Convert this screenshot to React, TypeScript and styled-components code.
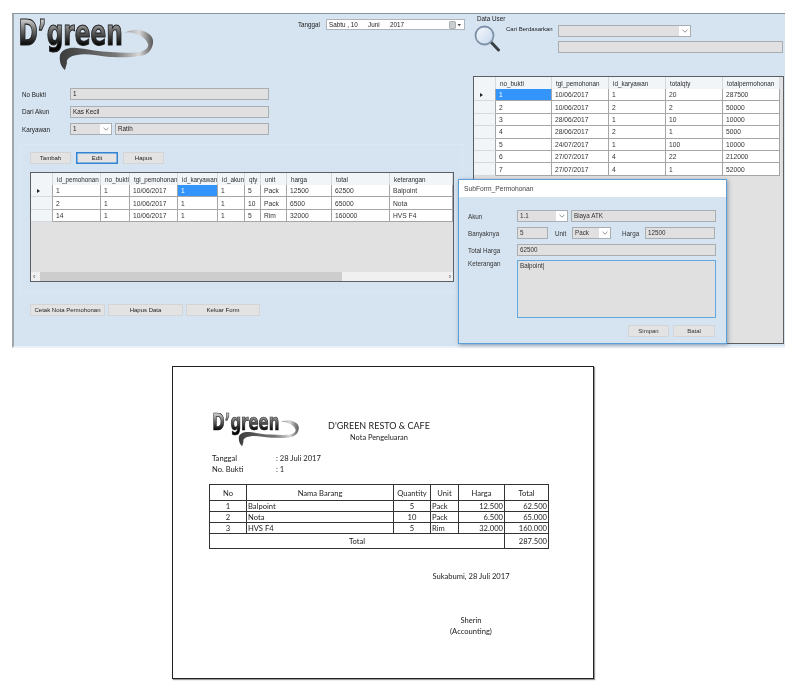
import React from "react";
import styled, { createGlobalStyle } from "styled-components";

const Global = createGlobalStyle`
  html, body { margin: 0; padding: 0; background: #fff; }
  body { font-family: "Liberation Sans", Arial, sans-serif; }
  * { box-sizing: border-box; }
`;

const Page = styled.div`
  width: 800px;
  height: 700px;
  padding-top: 13px;
  overflow: hidden;
`;

const AppWindow = styled.section`
  position: relative;
  display: flex;
  width: 773px;
  height: 335px;
  margin-left: 12px;
  background: #d6e4f2;
  border-top: 1px solid #8d939a;
  border-left: 2px solid #a3a6aa;
  border-bottom: 2px solid #e9f0f7;
  font-size: 6.3px;
  color: #222;
  filter: blur(0.35px);
`;

const LeftPane = styled.div`
  flex: 0 0 459px;
  padding-left: 8px;
`;

const HeaderRow = styled.div`
  display: flex;
  justify-content: space-between;
  align-items: flex-start;
  height: 74px;
  padding-right: 8px;
`;

const LogoSvg = styled.svg<{ $shift: number; $top: number }>`
  display: block;
  flex: none;
  margin: ${(p) => p.$top}px 0 0 ${(p) => p.$shift}px;
`;

const DateGroup = styled.div`
  display: flex;
  align-items: center;
  gap: 6px;
  margin-top: 5px;
`;

const DateBox = styled.div`
  display: flex;
  align-items: center;
  width: 139px;
  height: 11px;
  padding: 0 2px;
  background: #fff;
  border: 1px solid #aeb4ba;
`;

const DatePart = styled.span<{ $w: number }>`
  width: ${(p) => p.$w}px;
  flex: none;
`;

const CalendarIcon = styled.svg`
  margin-left: auto;
  display: block;
`;

const FieldStack = styled.div`
  display: flex;
  flex-direction: column;
  gap: 5.5px;
`;

const FieldRow = styled.div`
  display: flex;
  align-items: center;
  height: 12px;
  gap: 3px;
`;

const RowLabel = styled.span<{ $w: number }>`
  flex: none;
  width: ${(p) => p.$w}px;
`;

const InlineLabel = styled.span<{ $l: number; $w: number }>`
  flex: none;
  width: ${(p) => p.$w}px;
  margin-left: ${(p) => p.$l}px;
`;

const InputBox = styled.div<{ $w: number }>`
  flex: none;
  width: ${(p) => p.$w}px;
  height: 12px;
  line-height: 10px;
  padding-left: 2px;
  background: #e0e0e0;
  border: 1px solid #a9aeb3;
  white-space: nowrap;
`;

const SelectBox = styled.div<{ $w: number }>`
  flex: none;
  display: flex;
  justify-content: space-between;
  width: ${(p) => p.$w}px;
  height: 12px;
  line-height: 10px;
  padding-left: 2px;
  background: #e0e0e0;
  border: 1px solid #a9aeb3;
`;

const SelectArrow = styled.span`
  flex: none;
  width: 11px;
  height: 10px;
  display: flex;
  align-items: center;
  justify-content: center;
  background: #fff;
`;

const GroupPanel = styled.div`
  width: 443px;
  height: 149px;
  margin: 9px 0 0 -2px;
  padding: 7px 9px;
  border: 1px solid #dce7f3;
`;

const ButtonRow = styled.div<{ $gap: number }>`
  display: flex;
  gap: ${(p) => p.$gap}px;
`;

const Btn = styled.div<{ $w: number; $focus?: boolean }>`
  flex: none;
  width: ${(p) => p.$w}px;
  height: 12px;
  line-height: 10px;
  font-size: 6px;
  text-align: center;
  white-space: nowrap;
  background: #e3e3e3;
  border: 1px solid ${(p) => (p.$focus ? "#2f84d4" : "#d2d4d6")};
  ${(p) => (p.$focus ? "box-shadow: inset 0 0 0 0.5px #2f84d4;" : "")}
`;

const GridFrame = styled.div<{ $w: number; $h: number }>`
  position: relative;
  width: ${(p) => p.$w}px;
  height: ${(p) => p.$h}px;
  background: #e1e1e1;
  border: 1px solid #5b5f63;
  overflow: hidden;
`;

const DetailFrame = styled(GridFrame)`
  margin-top: 8px;
`;

const GridTable = styled.table<{ $w: number }>`
  width: ${(p) => p.$w}px;
  table-layout: fixed;
  border-collapse: separate;
  border-spacing: 0;
  font-size: 6.7px;
  color: #333;
`;

const HeadCell = styled.th`
  height: 12px;
  padding: 0 0 0 4px;
  background: #f2f5f8;
  font-weight: 400;
  font-size: 6.3px;
  text-align: left;
  white-space: nowrap;
  overflow: hidden;
  color: #2b2b2b;
  border-right: 1px solid #d5d9dd;
`;

const Cell = styled.td<{ $sel?: boolean }>`
  height: 12.4px;
  padding: 0 0 0 3px;
  background: ${(p) => (p.$sel ? "#3395fb" : "#fff")};
  color: ${(p) => (p.$sel ? "#fff" : "#333")};
  border-right: 1px solid #a6a6a6;
  border-bottom: 1px solid #a6a6a6;
  white-space: nowrap;
  overflow: hidden;
`;

const RowHeader = styled.td`
  height: 12.4px;
  padding: 0 0 0 6px;
  background: #f2f5f8;
  border-right: 1px solid #a6a6a6;
  border-bottom: 1px solid #d5d9dd;
`;

const RowPointer = styled.span`
  display: block;
  width: 0;
  height: 0;
  border-left: 3px solid #222;
  border-top: 2.5px solid transparent;
  border-bottom: 2.5px solid transparent;
`;

const ScrollBar = styled.div`
  position: absolute;
  left: 0;
  right: 0;
  bottom: 0;
  display: flex;
  align-items: center;
  height: 9px;
  background: #f0f0f0;
  color: #444;
  font-size: 7px;
  padding: 0 2px;
`;

const ScrollThumb = styled.div`
  width: 302px;
  height: 9px;
  margin-left: 5px;
  background: #cdcdcd;
`;

const ScrollEnd = styled.span`
  margin-left: auto;
`;

const BottomButtons = styled(ButtonRow)`
  margin: 11px 0 0 8px;
`;

const RightPane = styled.div`
  flex: 1;
  min-width: 0;
`;

const SearchHeader = styled.div`
  position: relative;
  height: 62px;
  padding: 0 2px 0 1px;
`;

const PaneTitle = styled.div`
  height: 10px;
  padding: 1px 0 0 3px;
`;

const SearchBody = styled.div`
  display: flex;
  align-items: flex-start;
`;

const Magnifier = styled.svg`
  flex: none;
  display: block;
  margin-top: 1px;
`;

const SearchLabel = styled.span`
  flex: none;
  width: 52px;
  margin: 2px 0 0 5px;
  font-size: 6px;
  white-space: nowrap;
`;

const SearchFields = styled.div`
  display: flex;
  flex-direction: column;
  gap: 4px;
  margin-top: 1px;
`;

const Dialog = styled.div`
  position: absolute;
  left: 444px;
  top: 165px;
  width: 269px;
  height: 165px;
  background: #d6e4f2;
  border: 1px solid #5c9fd8;
  box-shadow: 1px 1px 4px rgba(60, 80, 100, 0.5);
  color: #333;
`;

const DialogTitle = styled.div`
  height: 17px;
  line-height: 17px;
  padding-left: 5px;
  background: #fff;
  color: #444;
  font-size: 6.7px;
`;

const DialogBody = styled.div`
  display: flex;
  flex-direction: column;
  gap: 5px;
  padding: 13px 11px 0 9px;
`;

const TextArea = styled.div`
  flex: none;
  width: 199px;
  height: 58px;
  padding: 1px 2px;
  background: #e0e0e0;
  border: 1px solid #62a8e0;
`;

const AreaRow = styled.div`
  display: flex;
  height: 58px;
  margin-top: -1px;
`;

const DialogActions = styled(ButtonRow)`
  justify-content: flex-end;
  margin-top: 2px;
`;

const Sheet = styled.article`
  width: 422px;
  height: 313px;
  margin: 18px 0 0 172px;
  padding: 45px 0 0 39px;
  background: #fff;
  border: 1px solid #222;
  box-shadow: 1px 1px 1px #999;
  font-family: Lato, "Liberation Sans", sans-serif;
  font-size: 7.6px;
  color: #222;
  filter: blur(0.3px);
`;

const SheetHeader = styled.header`
  display: flex;
  height: 41px;
`;

const SheetTitles = styled.div`
  width: 104px;
  margin: 8px 0 0 27px;
  text-align: center;
`;

const SheetTitle = styled.div`
  font-size: 9px;
  line-height: 12px;
  white-space: nowrap;
`;

const SheetSub = styled.div`
  font-size: 7.4px;
  line-height: 12px;
`;

const MetaGrid = styled.dl`
  display: grid;
  grid-template-columns: 64px auto;
  grid-auto-rows: 11px;
  margin: 0;
  line-height: 11px;
`;

const MetaTerm = styled.dt`
  margin: 0;
`;

const MetaValue = styled.dd`
  margin: 0;
`;

const NoteTable = styled.table`
  width: 339px;
  margin: 9px 0 0 -3px;
  table-layout: fixed;
  border-collapse: collapse;
  font-size: 7.6px;
`;

const NoteHead = styled.th`
  height: 16px;
  padding: 0;
  border: 1px solid #333;
  font-weight: 400;
  text-align: center;
`;

const NoteCell = styled.td<{ $align: string }>`
  height: 11px;
  padding: 0 1px;
  border: 1px solid #333;
  text-align: ${(p) => p.$align};
  line-height: 9px;
`;

const NoteTotal = styled(NoteCell)`
  height: 15px;
`;

const SignBlock = styled.div`
  width: 100px;
  margin: 22px 0 0 209px;
  text-align: center;
  line-height: 11px;
  white-space: nowrap;
`;

const SignName = styled.div`
  margin-top: 33px;
`;

const Logo = ({ width, shift, top }: { width: number; shift: number; top: number }) => (
  <LogoSvg $shift={shift} $top={top} width={width} height={(width * 64) / 137} viewBox="0 -8 137 64">
    <defs>
      <linearGradient id="logoText" gradientUnits="userSpaceOnUse" x1="0" y1="-20" x2="0" y2="0">
        <stop offset="0" stopColor="#e4e4e4" />
        <stop offset="0.45" stopColor="#707070" />
        <stop offset="1" stopColor="#050505" />
      </linearGradient>
      <linearGradient id="logoSwoosh" x1="0" y1="0" x2="1" y2="0">
        <stop offset="0" stopColor="#3c3c3c" />
        <stop offset="0.6" stopColor="#777" />
        <stop offset="0.85" stopColor="#d8d8d8" />
        <stop offset="1" stopColor="#555" />
      </linearGradient>
    </defs>
    <path
      d="M105 16 C112 13 118 12 122 13 C131 15 136 20 135 26 C134 34 129 38 122 39 C110 41 100 40 92 40 C80 39 68 36 59 38 C52 39 48 42 49 46 L47 53 C43 50 41 44 42 38 C44 32 52 30 59 31 C70 32 82 35 92 35 C102 36 114 36 122 35 C128 33 131 30 130 27 C128 21 122 18 115 16 C111 15 108 15 105 16 Z"
      fill="url(#logoSwoosh)"
    />
    <text
      transform="translate(0.5 28) scale(0.895 1.385)"
      fontFamily="'DejaVu Sans', sans-serif"
      fontWeight="700"
      fontSize="26"
      fill="url(#logoText)"
      stroke="#222"
      strokeWidth="0.8"
    >
      D’green
    </text>
  </LogoSvg>
);

const Chevron = () => (
  <svg width="6" height="4" viewBox="0 0 6 4">
    <path d="M0.5 0.8 L3 3.2 L5.5 0.8" fill="none" stroke="#777" strokeWidth="0.8" />
  </svg>
);

const Select = ({ w, value }: { w: number; value?: string }) => (
  <SelectBox $w={w}>
    <span>{value}</span>
    <SelectArrow>
      <Chevron />
    </SelectArrow>
  </SelectBox>
);

const detailCols = [22, 48, 29, 48, 40, 27, 16, 26, 45, 58, 63];
const detailHead = ["", "id_pemohonan", "no_bukti", "tgl_pemohonan", "id_karyawan", "id_akun", "qty", "unit", "harga", "total", "keterangan"];
const detailRows = [
  ["1", "1", "10/06/2017", "1", "1", "5", "Pack", "12500", "62500", "Balpoint"],
  ["2", "1", "10/06/2017", "1", "1", "10", "Pack", "6500", "65000", "Nota"],
  ["14", "1", "10/06/2017", "1", "1", "5", "Rim", "32000", "160000", "HVS F4"],
];

const masterCols = [22, 56, 57, 57, 57, 57];
const masterHead = ["", "no_bukti", "tgl_pemohonan", "id_karyawan", "totalqty", "totalpermohonan"];
const masterRows = [
  ["1", "10/06/2017", "1", "20", "287500"],
  ["2", "10/06/2017", "2", "2", "50000"],
  ["3", "28/06/2017", "1", "10", "10000"],
  ["4", "28/06/2017", "2", "1", "5000"],
  ["5", "24/07/2017", "1", "100", "10000"],
  ["6", "27/07/2017", "4", "22", "212000"],
  ["7", "27/07/2017", "4", "1", "52000"],
];

const DataGrid = ({ cols, head, rows, selected }: { cols: number[]; head: string[]; rows: string[][]; selected: number }) => (
  <GridTable $w={cols.reduce((a, b) => a + b, 0)}>
    <colgroup>
      {cols.map((c, i) => (
        <col key={i} width={c} />
      ))}
    </colgroup>
    <thead>
      <tr>
        {head.map((h, i) => (
          <HeadCell key={i}>{h}</HeadCell>
        ))}
      </tr>
    </thead>
    <tbody>
      {rows.map((r, ri) => (
        <tr key={ri}>
          <RowHeader>{ri === 0 && <RowPointer />}</RowHeader>
          {r.map((c, ci) => (
            <Cell key={ci} $sel={ri === 0 && ci === selected}>
              {c}
            </Cell>
          ))}
        </tr>
      ))}
    </tbody>
  </GridTable>
);

const noteCols = [37, 147, 37, 28, 46, 44];
const noteRows = [
  ["1", "Balpoint", "5", "Pack", "12.500", "62.500"],
  ["2", "Nota", "10", "Pack", "6.500", "65.000"],
  ["3", "HVS F4", "5", "Rim", "32.000", "160.000"],
];
const noteAlign = ["center", "left", "center", "left", "right", "right"];

export default function App() {
  return (
    <Page>
      <Global />
      <AppWindow>
        <LeftPane>
          <HeaderRow>
            <Logo width={137} shift={-4} top={-5} />
            <DateGroup>
              <span>Tanggal</span>
              <DateBox>
                <DatePart $w={39}>Sabtu , 10</DatePart>
                <DatePart $w={22}>Juni</DatePart>
                <span>2017</span>
                <CalendarIcon width="13" height="8" viewBox="0 0 13 8">
                  <rect x="0.5" y="0.5" width="6" height="7" rx="1" fill="#c9ced3" stroke="#888" strokeWidth="0.6" />
                  <path d="M8.5 3 L12 3 L10.2 5.2 Z" fill="#444" />
                </CalendarIcon>
              </DateBox>
            </DateGroup>
          </HeaderRow>
          <FieldStack>
            <FieldRow>
              <RowLabel $w={45}>No Bukti</RowLabel>
              <InputBox $w={199}>1</InputBox>
            </FieldRow>
            <FieldRow>
              <RowLabel $w={45}>Dari Akun</RowLabel>
              <InputBox $w={199}>Kas Kecil</InputBox>
            </FieldRow>
            <FieldRow>
              <RowLabel $w={45}>Karyawan</RowLabel>
              <Select w={42} value="1" />
              <InputBox $w={154}>Ratih</InputBox>
            </FieldRow>
          </FieldStack>
          <GroupPanel>
            <ButtonRow $gap={5}>
              <Btn $w={41}>Tambah</Btn>
              <Btn $w={42} $focus>
                Edit
              </Btn>
              <Btn $w={41}>Hapus</Btn>
            </ButtonRow>
            <DetailFrame $w={424} $h={110}>
              <DataGrid cols={detailCols} head={detailHead} rows={detailRows} selected={3} />
              <ScrollBar>
                ‹
                <ScrollThumb />
                <ScrollEnd>›</ScrollEnd>
              </ScrollBar>
            </DetailFrame>
          </GroupPanel>
          <BottomButtons $gap={3}>
            <Btn $w={75}>Cetak Nota Permohonan</Btn>
            <Btn $w={75}>Hapus Data</Btn>
            <Btn $w={74}>Keluar Form</Btn>
          </BottomButtons>
        </LeftPane>
        <RightPane>
          <SearchHeader>
            <PaneTitle>Data User</PaneTitle>
            <SearchBody>
              <Magnifier width="27" height="27" viewBox="0 0 27 27">
                <defs>
                  <linearGradient id="lens" x1="0" y1="0" x2="1" y2="1">
                    <stop offset="0" stopColor="#f7fbff" />
                    <stop offset="1" stopColor="#c4d6ea" />
                  </linearGradient>
                </defs>
                <path d="M16 16 L24.5 25" stroke="#3a3f44" strokeWidth="3" strokeLinecap="round" />
                <circle cx="10.5" cy="10.5" r="9" fill="url(#lens)" stroke="#7f93a8" strokeWidth="1.8" />
              </Magnifier>
              <SearchLabel>Cari Berdasarkan</SearchLabel>
              <SearchFields>
                <Select w={133} />
                <InputBox $w={225} />
              </SearchFields>
            </SearchBody>
          </SearchHeader>
          <GridFrame $w={311} $h={268}>
            <DataGrid cols={masterCols} head={masterHead} rows={masterRows} selected={0} />
          </GridFrame>
        </RightPane>
        <Dialog>
          <DialogTitle>SubForm_Permohonan</DialogTitle>
          <DialogBody>
            <FieldRow>
              <RowLabel $w={46}>Akun</RowLabel>
              <Select w={51} value="1.1" />
              <InputBox $w={145}>Biaya ATK</InputBox>
            </FieldRow>
            <FieldRow>
              <RowLabel $w={46}>Banyaknya</RowLabel>
              <InputBox $w={31}>5</InputBox>
              <InlineLabel $l={4} $w={14}>
                Unit
              </InlineLabel>
              <Select w={39} value="Pack" />
              <InlineLabel $l={8} $w={20}>
                Harga
              </InlineLabel>
              <InputBox $w={70}>12500</InputBox>
            </FieldRow>
            <FieldRow>
              <RowLabel $w={46}>Total Harga</RowLabel>
              <InputBox $w={199}>62500</InputBox>
            </FieldRow>
            <AreaRow>
              <RowLabel $w={49}>Keterangan</RowLabel>
              <TextArea>Balpoint|</TextArea>
            </AreaRow>
            <DialogActions $gap={4}>
              <Btn $w={41}>Simpan</Btn>
              <Btn $w={42}>Batal</Btn>
            </DialogActions>
          </DialogBody>
        </Dialog>
      </AppWindow>
      <Sheet>
        <SheetHeader>
          <Logo width={88} shift={0} top={-5} />
          <SheetTitles>
            <SheetTitle>D'GREEN RESTO &amp; CAFE</SheetTitle>
            <SheetSub>Nota Pengeluaran</SheetSub>
          </SheetTitles>
        </SheetHeader>
        <MetaGrid>
          <MetaTerm>Tanggal</MetaTerm>
          <MetaValue>: 28 Juli 2017</MetaValue>
          <MetaTerm>No. Bukti</MetaTerm>
          <MetaValue>: 1</MetaValue>
        </MetaGrid>
        <NoteTable>
          <colgroup>
            {noteCols.map((c, i) => (
              <col key={i} width={c} />
            ))}
          </colgroup>
          <thead>
            <tr>
              {["No", "Nama Barang", "Quantity", "Unit", "Harga", "Total"].map((h) => (
                <NoteHead key={h}>{h}</NoteHead>
              ))}
            </tr>
          </thead>
          <tbody>
            {noteRows.map((r) => (
              <tr key={r[0]}>
                {r.map((c, i) => (
                  <NoteCell key={i} $align={noteAlign[i]}>
                    {c}
                  </NoteCell>
                ))}
              </tr>
            ))}
            <tr>
              <NoteTotal colSpan={5} $align="center">
                Total
              </NoteTotal>
              <NoteTotal $align="right">287.500</NoteTotal>
            </tr>
          </tbody>
        </NoteTable>
        <SignBlock>
          <div>Sukabumi, 28 Juli 2017</div>
          <SignName>Sherin</SignName>
          <div>(Accounting)</div>
        </SignBlock>
      </Sheet>
    </Page>
  );
}
